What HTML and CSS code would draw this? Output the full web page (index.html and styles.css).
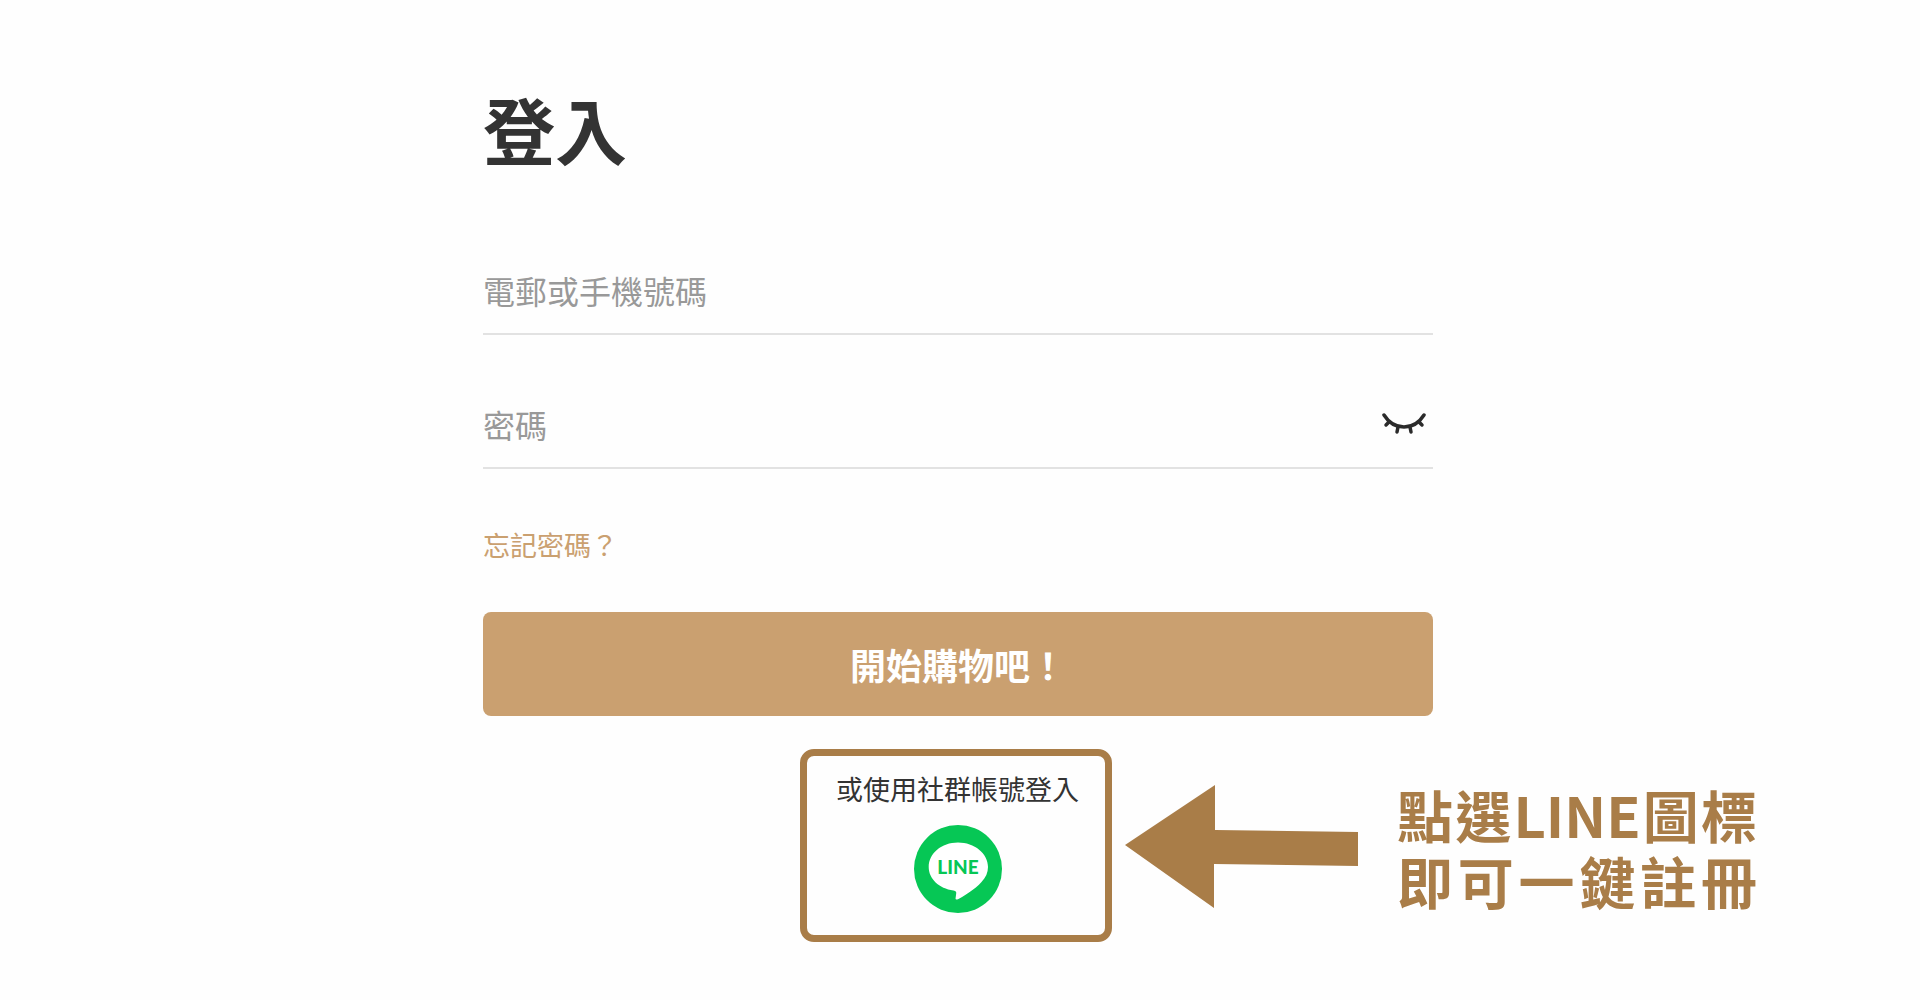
FILE: index.html
```html
<!DOCTYPE html>
<html lang="zh-Hant">
<head>
    <meta charset="UTF-8">
    <meta name="viewport" content="width=device-width, initial-scale=1.0">
    <title>登入</title>
    <link rel="stylesheet" href="styles.css">
</head>
<body>
    <main class="page">
        <form class="login-form">
            <h1>登入</h1>
            <div class="field">
                <input type="text" name="account" aria-label="電郵或手機號碼" placeholder="電郵或手機號碼">
            </div>
            <div class="field">
                <input type="password" name="password" aria-label="密碼" placeholder="密碼">
                <button class="toggle-password" type="button" aria-label="顯示密碼">
                    <svg width="44" height="24" viewBox="0 0 44 24" fill="none" stroke="#2b2b2b" stroke-width="3.500" stroke-linecap="round">
                        <path d="M2 3C7 11 14 15 22 15S37 11 42 3"/>
                        <path d="M7 10L4 13M16 15L15 20M28 15L29 20M37 10L40 13"/>
                    </svg>
                </button>
            </div>
            <a class="forgot" href="#">忘記密碼？</a>
            <button class="submit" type="submit">開始購物吧！</button>
        </form>

        <section class="social">
            <div class="social-box">
                <p>或使用社群帳號登入</p>
                <a class="line-login" href="#" aria-label="LINE">
                    <svg width="88" height="88" viewBox="0 0 88 88">
                        <circle cx="44" cy="44" r="44" fill="#06c755"/>
                        <path d="M44 17.500C60.500 17.500 74 28.500 74 42C74 47.500 71.800 52.500 67.500 57C61.500 64 48 72.500 44 74.200C41 75.500 41.500 73.400 41.700 72.300L42.200 68.500C42.400 67.300 42.200 65.900 39.500 65.500C25 63.500 14.700 53.800 14.700 42C14.700 28.500 27.500 17.500 44 17.500Z" fill="#fff"/>
                        <text class="line-name" x="44" y="49" text-anchor="middle">LINE</text>
                    </svg>
                </a>
            </div>
            <div class="callout">
                <svg class="arrow" width="234" height="124" viewBox="0 0 234 124">
                    <path d="M0 60L90 0V45L233 47V81L89 79V123Z" fill="#a97d48"/>
                </svg>
                <p class="callout-text">點選LINE圖標<br>即可一鍵註冊</p>
            </div>
        </section>
    </main>
</body>
</html>
```

FILE: styles.css
```css
* {
    box-sizing: border-box;
}

body {
    margin: 0;
    background: #fefefe;
    color: #333;
    font-family: "Noto Sans CJK TC", sans-serif;
}

h1, p {
    margin: 0;
}

button, input {
    font-family: inherit;
    border: none;
    background: none;
    padding: 0;
}

.page {
    padding: 76px 4px 56px 0;
}

.login-form {
    display: flex;
    flex-direction: column;
    width: 100%;
    max-width: 950px;
    margin: 0 auto;
}

h1 {
    font-size: 72px;
    font-weight: 700;
    line-height: 104px;
    margin-bottom: 69px;
}

.field {
    display: flex;
    align-items: center;
    height: 86px;
    margin-bottom: 48px;
    padding-bottom: 3px;
    border-bottom: 2px solid #e2e2e2;
}

.field input {
    flex: 1;
    min-width: 0;
    height: 100%;
    font-size: 32px;
    color: #333;
    outline: none;
}

.field input::placeholder {
    color: #999;
    opacity: 1;
}

.toggle-password {
    margin-right: 7px;
    cursor: pointer;
}

.toggle-password svg, .line-login svg, .arrow {
    display: block;
}

.forgot {
    align-self: flex-start;
    margin-bottom: 39px;
    font-size: 27px;
    line-height: 56px;
    color: #caa070;
    text-decoration: none;
}

.submit {
    height: 104px;
    border-radius: 8px;
    background: #caa070;
    color: #fff;
    font-size: 36px;
    font-weight: 700;
    cursor: pointer;
}

/* the login box stays centred, the callout takes the free column at its right */
.social {
    display: grid;
    grid-template-columns: 1fr auto 1fr;
    align-items: center;
    margin-top: 33px;
    padding-right: 4px;
}

.social-box {
    grid-column: 2;
    display: flex;
    flex-direction: column;
    align-items: center;
    gap: 16px;
    padding: 13px 26px 22px 29px;
    border: 7px solid #a97d48;
    border-radius: 14px;
    font-size: 27px;
    line-height: 40px;
}

.line-name {
    fill: #06c755;
    font-family: Lato, sans-serif;
    font-size: 19px;
    font-weight: 900;
}

.callout {
    display: flex;
    align-items: center;
    gap: 38px;
    padding-top: 3px;
    padding-left: 13px;
}

.callout-text {
    width: 360px;
    color: #a97d48;
    font-size: 56px;
    font-weight: 700;
    line-height: 66px;
    text-align: justify;
    text-align-last: justify;
}
```
